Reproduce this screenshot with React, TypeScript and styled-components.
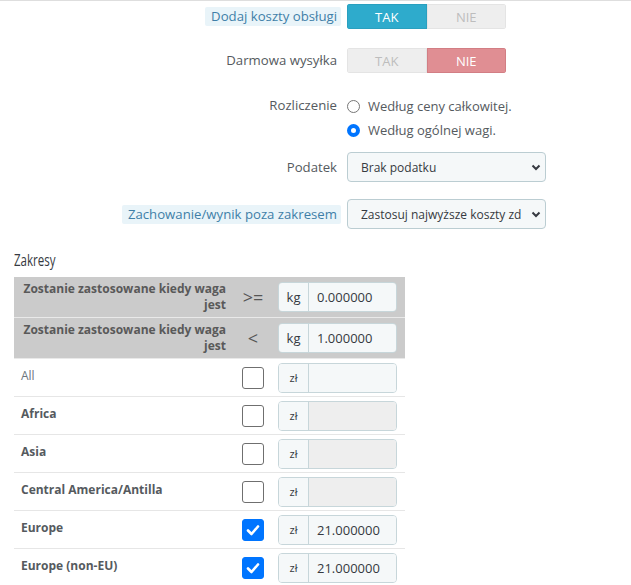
import styled, { createGlobalStyle } from "styled-components";

const Global = createGlobalStyle`
	body {
		margin: 0;
		background: #fff;
		font-family: "Open Sans", "Liberation Sans", sans-serif;
		color: #363a41;
	}
`;

const Page = styled.div`
	border-top: 1px solid #dedede;
	padding-top: 3px;
	width: 631px;
	height: 584px;
	overflow: hidden;
`;

const FormRow = styled.div<{ gap: number }>`
	display: grid;
	grid-template-columns: 337px 199px;
	column-gap: 10px;
	align-items: center;
	margin-bottom: ${(p) => p.gap}px;
`;

const LabelCell = styled.div<{ top?: boolean }>`
	display: flex;
	justify-content: flex-end;
	align-self: ${(p) => (p.top ? "start" : "center")};
`;

const Label = styled.span<{ hint?: boolean }>`
	font-size: 13.2px;
	line-height: 19px;
	padding: 0 4px 0 6px;
	border-radius: 2px;
	color: ${(p) => (p.hint ? "#3f7fa8" : "#555a5e")};
	background: ${(p) => (p.hint ? "#e9f4f9" : "transparent")};
	margin-right: -4px;
`;

const Toggle = styled.div`
	display: flex;
	width: 159px;
	height: 25px;
	border-radius: 3px;
	overflow: hidden;
`;

const ToggleHalf = styled.div<{ active: boolean; tone: "blue" | "red" }>`
	flex: 1;
	display: flex;
	align-items: center;
	justify-content: center;
	font-size: 13px;
	background: ${(p) => (p.active ? (p.tone === "blue" ? "#2eabcc" : "#e08e93") : "#eeeeee")};
	color: ${(p) => (p.active ? "#ffffff" : "#bdbdbd")};
	border: 1px solid ${(p) => (p.active ? (p.tone === "blue" ? "#2aa0bf" : "#d27e84") : "#e4e4e4")};
`;

const RadioList = styled.div`
	display: flex;
	flex-direction: column;
`;

const RadioLine = styled.label`
	display: flex;
	align-items: center;
	height: 24px;
	font-size: 13px;
	color: #555a5e;
	white-space: nowrap;
`;

const RadioDot = styled.span<{ checked: boolean }>`
	width: 13px;
	height: 13px;
	box-sizing: border-box;
	border-radius: 50%;
	margin: 0 8px 0 0;
	border: ${(p) => (p.checked ? "4px solid #0075ff" : "1px solid #767676")};
	background: #fff;
	box-shadow: ${(p) => (p.checked ? "inset 0 0 0 1px #fff" : "none")};
`;

const Select = styled.div`
	display: flex;
	align-items: center;
	justify-content: space-between;
	box-sizing: border-box;
	height: 30px;
	padding: 0 4px 0 13px;
	background: #f5f8f9;
	border: 1px solid #bbcdd2;
	border-radius: 4px;
	font-size: 12px;
	color: #363a41;
	white-space: nowrap;
	overflow: hidden;
`;

const SelectText = styled.span`
	overflow: hidden;
	flex: 1;
	margin-right: 10px;
`;

const Heading = styled.div`
	margin: 0 0 7px 14px;
	font-size: 16px;
	line-height: 20px;
	color: #363a41;
	transform: scaleX(0.72);
	transform-origin: left center;
`;

const Table = styled.div`
	margin-left: 14px;
	width: 391px;
`;

const TableRow = styled.div<{ head?: boolean }>`
	display: grid;
	grid-template-columns: 218px 40px 133px;
	align-items: center;
	height: ${(p) => (p.head ? 40 : 37)}px;
	background: ${(p) => (p.head ? "#cbcbcb" : "transparent")};
	border-bottom: 1px solid ${(p) => (p.head ? "#e9e9e9" : "#e6e6e6")};
`;

const HeadText = styled.div`
	text-align: right;
	padding-right: 6px;
	font-size: 12px;
	line-height: 16px;
	font-weight: 700;
	color: #595959;
`;

const Operator = styled.div`
	text-align: center;
	font-size: 18px;
	color: #555;
	padding-left: 2px;
`;

const ZoneName = styled.div<{ plain?: boolean }>`
	padding: 0 0 4px 7px;
	font-size: 12px;
	font-weight: ${(p) => (p.plain ? 400 : 700)};
	color: ${(p) => (p.plain ? "#6c757d" : "#555a5e")};
`;

const Check = styled.span<{ checked: boolean }>`
	justify-self: center;
	display: flex;
	align-items: center;
	justify-content: center;
	box-sizing: border-box;
	width: 22px;
	height: 22px;
	border-radius: 3px;
	background: ${(p) => (p.checked ? "#0075ff" : "#fff")};
	border: 1px solid ${(p) => (p.checked ? "#0075ff" : "#6f6f6f")};
	margin-left: 1px;
`;

const InputGroup = styled.div`
	display: flex;
	width: 119px;
	height: 30px;
	margin-left: 6px;
	box-sizing: border-box;
	border: 1px solid #c7d6da;
	border-radius: 4px;
	overflow: hidden;
`;

const Addon = styled.span<{ small?: boolean }>`
	width: 29px;
	display: flex;
	align-items: center;
	justify-content: center;
	background: #f5f8f9;
	border-right: 1px solid #c7d6da;
	font-size: ${(p) => (p.small ? 11 : 13)}px;
	color: #363a41;
`;

const Field = styled.span<{ disabled?: boolean }>`
	flex: 1;
	display: flex;
	align-items: center;
	padding-left: 8px;
	font-size: 13px;
	color: #363a41;
	background: ${(p) => (p.disabled ? "#eeeeee" : "#f5f8f9")};
`;

const Chevron = () => (
	<svg width="10" height="7" viewBox="0 0 10 7">
		<path d="M1.5 1.5 L5 5 L8.5 1.5" fill="none" stroke="#363a41" strokeWidth="2" />
	</svg>
);

const Tick = () => (
	<svg width="16" height="16" viewBox="0 0 16 16">
		<path d="M3 8.5 L6.5 12 L13 4.5" fill="none" stroke="#fff" strokeWidth="2.6" strokeLinecap="round" strokeLinejoin="round" />
	</svg>
);

const zones = [
	{ name: "All", plain: true, checked: false, value: "", disabled: false },
	{ name: "Africa", checked: false, value: "", disabled: true },
	{ name: "Asia", checked: false, value: "", disabled: true },
	{ name: "Central America/Antilla", checked: false, value: "", disabled: true },
	{ name: "Europe", checked: true, value: "21.000000", disabled: false },
	{ name: "Europe (non-EU)", checked: true, value: "21.000000", disabled: false },
];

const limits = [
	{ op: ">=", value: "0.000000" },
	{ op: "<", value: "1.000000" },
];

export default function App() {
	return (
		<Page>
			<Global />
			<FormRow gap={19}>
				<LabelCell>
					<Label hint>Dodaj koszty obsługi</Label>
				</LabelCell>
				<Toggle>
					<ToggleHalf active tone="blue">TAK</ToggleHalf>
					<ToggleHalf active={false} tone="blue">NIE</ToggleHalf>
				</Toggle>
			</FormRow>
			<FormRow gap={21}>
				<LabelCell>
					<Label>Darmowa wysyłka</Label>
				</LabelCell>
				<Toggle>
					<ToggleHalf active={false} tone="red">TAK</ToggleHalf>
					<ToggleHalf active tone="red">NIE</ToggleHalf>
				</Toggle>
			</FormRow>
			<FormRow gap={10}>
				<LabelCell top>
					<Label style={{ lineHeight: "22px" }}>Rozliczenie</Label>
				</LabelCell>
				<RadioList>
					<RadioLine>
						<RadioDot checked={false} />
						Według ceny całkowitej.
					</RadioLine>
					<RadioLine>
						<RadioDot checked />
						Według ogólnej wagi.
					</RadioLine>
				</RadioList>
			</FormRow>
			<FormRow gap={17}>
				<LabelCell>
					<Label>Podatek</Label>
				</LabelCell>
				<Select>
					<SelectText>Brak podatku</SelectText>
					<Chevron />
				</Select>
			</FormRow>
			<FormRow gap={21}>
				<LabelCell>
					<Label hint>Zachowanie/wynik poza zakresem</Label>
				</LabelCell>
				<Select>
					<SelectText>Zastosuj najwyższe koszty zd</SelectText>
					<Chevron />
				</Select>
			</FormRow>
			<Heading>Zakresy</Heading>
			<Table>
				{limits.map((l) => (
					<TableRow head key={l.op}>
						<HeadText>
							Zostanie zastosowane kiedy waga
							<br />
							jest
						</HeadText>
						<Operator>{l.op}</Operator>
						<InputGroup>
							<Addon>kg</Addon>
							<Field>{l.value}</Field>
						</InputGroup>
					</TableRow>
				))}
				{zones.map((z) => (
					<TableRow key={z.name}>
						<ZoneName plain={z.plain}>{z.name}</ZoneName>
						<Check checked={z.checked}>{z.checked && <Tick />}</Check>
						<InputGroup>
							<Addon small>zł</Addon>
							<Field disabled={z.disabled}>{z.value}</Field>
						</InputGroup>
					</TableRow>
				))}
			</Table>
		</Page>
	);
}
